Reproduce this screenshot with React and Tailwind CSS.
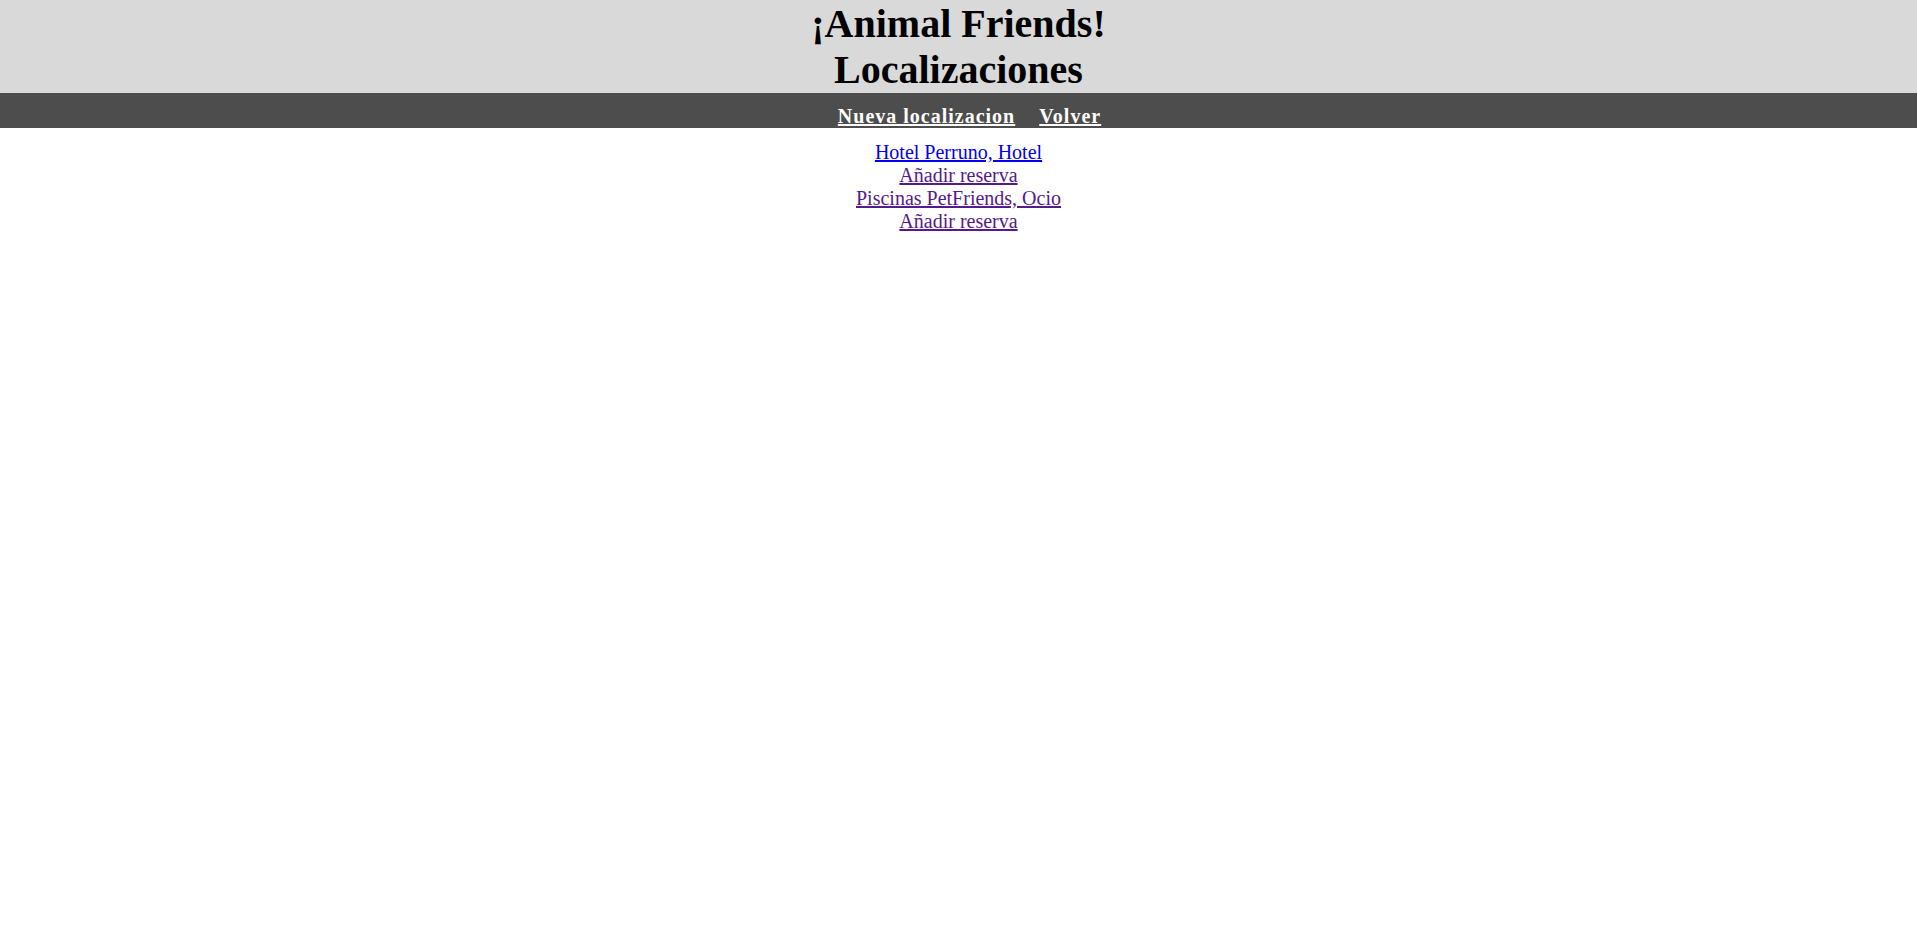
import React from 'react';

const App = () => {
  return (
    <div className="min-h-screen bg-white text-center" style={{ fontFamily: '"Liberation Serif", serif' }}>
      <div className="bg-[#d9d9d9] h-[93px] pt-[1px] text-[40px] leading-[46px] font-bold text-black">
        <div>¡Animal Friends!</div>
        <div>Localizaciones</div>
      </div>
      <div className="bg-[#4d4d4d] h-[35px] pt-[13px] pl-[22px] flex justify-center items-start gap-6 text-[20px] leading-[20px] font-bold tracking-[1px] text-white">
        <a href="#" className="underline">Nueva localizacion</a>
        <a href="#" className="underline">Volver</a>
      </div>
      <div className="pt-[13px] text-[20px] leading-[23px] flex flex-col items-center">
        <a href="#" className="underline text-[#0000ee]">Hotel Perruno, Hotel</a>
        <a href="#" className="underline text-[#551a8b]">Añadir reserva</a>
        <a href="#" className="underline text-[#551a8b]">Piscinas PetFriends, Ocio</a>
        <a href="#" className="underline text-[#551a8b]">Añadir reserva</a>
      </div>
    </div>
  );
};

export default App;
